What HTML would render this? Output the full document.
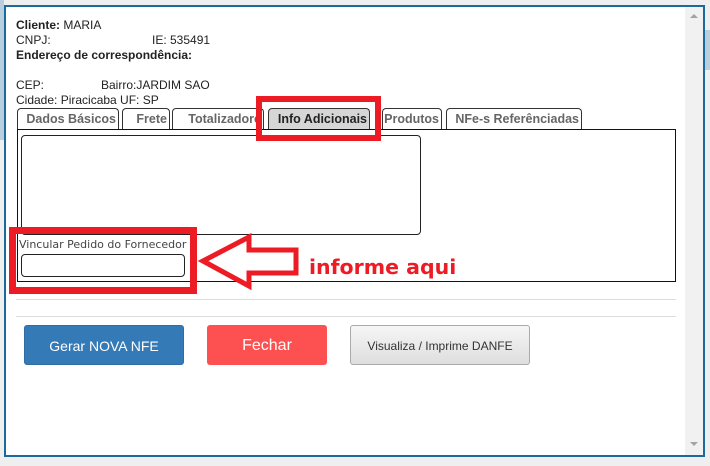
<!DOCTYPE html>
<html><head><meta charset="utf-8"><style>
*{margin:0;padding:0;box-sizing:border-box}
body{width:710px;height:466px;overflow:hidden;background:#efefef;position:relative;font-family:"Liberation Sans",Arial,sans-serif;}
.a{position:absolute}
.dlg{left:4px;top:5px;width:701px;height:452px;border:2px solid #1b6a9c;background:#fff}
.t{font-size:12px;color:#222;position:absolute;left:16px;white-space:nowrap}
.tab{position:absolute;top:108px;height:22px;border:1px solid #333;border-bottom:none;border-radius:4px 4px 0 0;font-size:12.5px;font-weight:bold;color:#666;text-align:right;padding-right:2px;line-height:20px;background:#fff;white-space:nowrap;overflow:hidden}
.btn{position:absolute;top:325px;height:40px;border-radius:3px;text-align:center;line-height:40px;font-size:14px}
</style></head><body>
<div class="a" style="left:0;top:0;width:4px;height:140px;background:#b9cfe0"></div>
<div class="a" style="left:704px;top:30px;width:6px;height:40px;background:#b9cfe0"></div>
<div class="a dlg"></div>
<div class="a" style="left:685px;top:7px;width:18px;height:448px;background:#f1f1f1"></div>
<div class="a" style="left:690px;top:14px;width:0;height:0;border-left:4px solid transparent;border-right:4px solid transparent;border-bottom:4px solid #a3a3a3"></div>
<div class="a" style="left:690px;top:442px;width:0;height:0;border-left:4px solid transparent;border-right:4px solid transparent;border-top:4px solid #a3a3a3"></div>

<div class="t" style="top:18px"><b>Cliente:</b> MARIA</div>
<div class="t" style="top:33px">CNPJ:</div>
<div class="t" style="top:33px;left:152px">IE: 535491</div>
<div class="t" style="top:48px"><b>Endereço de correspondência:</b></div>
<div class="t" style="top:78px">CEP:</div>
<div class="t" style="top:78px;left:101px">Bairro:JARDIM SAO</div>
<div class="t" style="top:93px">Cidade: Piracicaba UF: SP</div>

<div class="tab" style="left:17px;width:102px">Dados Básicos</div>
<div class="tab" style="left:122px;width:48px">Frete</div>
<div class="tab" style="left:172px;width:92px">Totalizadore</div>
<div class="tab" style="left:268px;width:102px;background:#d6d6d6;color:#222">Info Adicionais</div>
<div class="tab" style="left:382px;width:60px">Produtos</div>
<div class="tab" style="left:446px;width:136px">NFe-s Referênciadas</div>

<div class="a" style="left:17px;top:129px;width:659px;height:153px;border:1px solid #111"></div>
<div class="a" style="left:21px;top:135px;width:400px;height:100px;border:1px solid #222;border-radius:4px"></div>
<div class="a" style="left:21px;top:254px;width:164px;height:23px;border:1px solid #222;border-radius:4px"></div>

<div class="a" style="left:256px;top:96px;width:125px;height:45px;border:6px solid #ed1c24"></div>
<div class="a" style="left:9px;top:227px;width:188px;height:67px;border:7px solid #ed1c24"></div>
<div class="a" style="left:19px;top:238px;font-family:'DejaVu Sans',sans-serif;font-size:11px;color:#444;white-space:nowrap;z-index:2">Vincular Pedido do Fornecedor</div>
<svg class="a" style="left:0;top:0" width="710" height="466"><polygon points="203,261 249,237 249,250 296,250 296,273 249,273 249,286" fill="#fff" stroke="#ed1c24" stroke-width="5"/></svg>
<div class="a" style="left:309px;top:255px;font-family:'DejaVu Sans',sans-serif;font-weight:bold;font-size:20.5px;color:#ed1c24">informe aqui</div>

<div class="a" style="left:16px;top:299px;width:660px;height:1px;background:#ddd"></div>
<div class="a" style="left:16px;top:316px;width:660px;height:1px;background:#ddd"></div>

<div class="btn" style="left:24px;width:160px;background:#337ab7;color:#fff;border:1px solid #2e6da4">Gerar NOVA NFE</div>
<div class="btn" style="left:207px;width:120px;background:#fd5050;color:#fff;font-size:16px;line-height:42px">Fechar</div>
<div class="btn" style="left:350px;width:180px;background:linear-gradient(#f6f6f6,#dedede);color:#333;border:1px solid #aaa;font-size:12px">Visualiza / Imprime DANFE</div>
</body></html>
